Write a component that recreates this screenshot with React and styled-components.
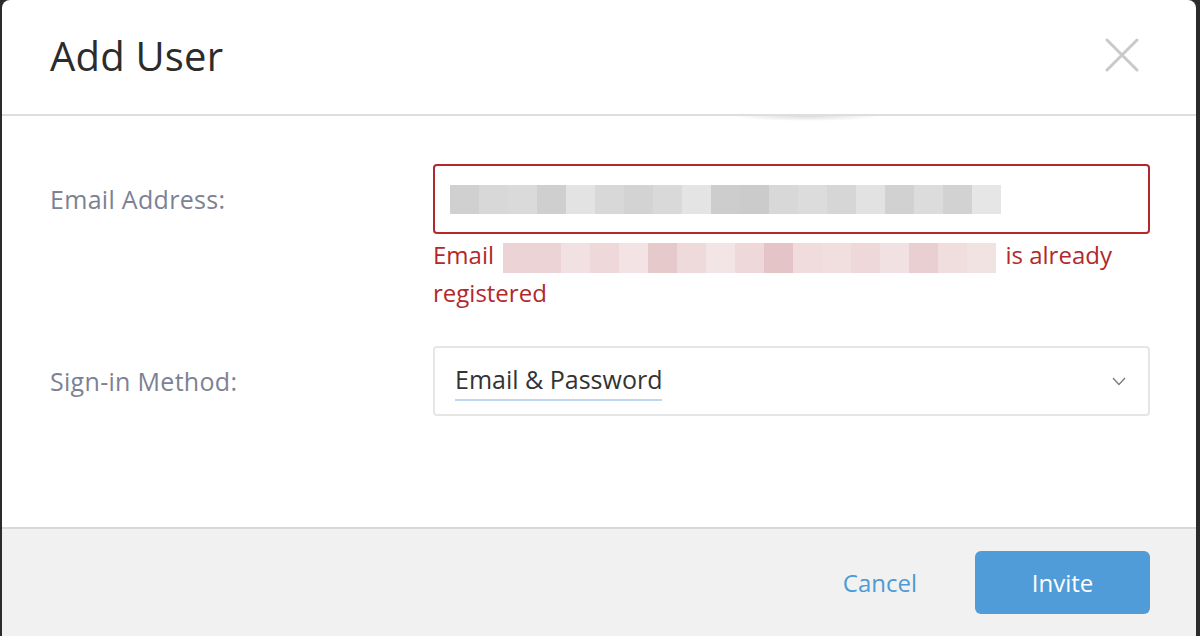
import styled, { createGlobalStyle } from 'styled-components';

const GlobalStyle = createGlobalStyle`
  html, body {
    margin: 0;
    padding: 0;
    background: #2b2b2b;
    overflow: hidden;
  }
  * {
    box-sizing: border-box;
  }
`;

const emailShades = [
  '#d0d0d0', '#d8d8d8', '#dadada', '#cfcfcf', '#e3e3e3', '#d8d8d8', '#d3d3d3',
  '#d9d9d9', '#e4e4e4', '#cdcdcd', '#cbcbcb', '#d8d8d8', '#dcdcdc', '#d6d6d6',
  '#e2e2e2', '#d1d1d1', '#dcdcdc', '#d2d2d2', '#e6e6e6',
];

const errorShades = [
  '#ecd3d5', '#ecd3d5', '#f2e1e2', '#eed8d9', '#f3e3e4', '#e6c9cb', '#efdadb',
  '#f3e4e5', '#eed8da', '#e4c4c6', '#f0dcdd', '#f1dfe0', '#eed8d9', '#f2e1e2',
  '#e9cfd1', '#f0dddd', '#f2e3e3',
];

const Dialog = styled.div`
  width: 1194px;
  height: 636px;
  margin: 0 4px 0 2px;
  background: #fff;
  border-radius: 8px 8px 0 0;
  display: flex;
  flex-direction: column;
  font-family: 'Open Sans', 'Liberation Sans', sans-serif;
  overflow: hidden;
`;

const Header = styled.div`
  height: 116px;
  flex: none;
  display: flex;
  align-items: center;
  justify-content: space-between;
  padding: 0 56px 4px 48px;
  border-bottom: 2px solid #dedede;
`;

const Title = styled.h1`
  margin: 0;
  font-size: 40px;
  font-weight: 400;
  color: #2c2c2c;
  letter-spacing: 0.2px;
`;

const CloseButton = styled.button`
  width: 36px;
  height: 36px;
  padding: 0;
  border: none;
  background: none;
  display: flex;
  align-items: center;
  justify-content: center;
  cursor: pointer;
`;

const Body = styled.div`
  flex: 1;
  padding: 48px 46px 0 48px;
  display: flex;
  flex-direction: column;
  gap: 34px;
  background: radial-gradient(ellipse 75px 5px at 805px 0, rgba(0, 0, 0, 0.14), transparent)
    no-repeat;
`;

const Row = styled.div`
  display: grid;
  grid-template-columns: 383px 1fr;
  align-items: start;
`;

const Label = styled.label`
  line-height: 70px;
  font-size: 25px;
  letter-spacing: 0.3px;
  color: #7c8294;
`;

const Field = styled.div`
  display: flex;
  flex-direction: column;
`;

const InputBox = styled.div`
  height: 70px;
  border: 2px solid ${(p) => (p.$error ? '#b2282b' : '#e6e6e6')};
  border-radius: 4px;
  display: flex;
  align-items: center;
  padding: 0 22px 0 15px;
  background: #fff;
`;

const Redacted = styled.span`
  display: inline-flex;
  vertical-align: middle;
  height: ${(p) => p.$h}px;
  margin: 0 ${(p) => p.$gap || 0}px;
`;

const Block = styled.span`
  width: 29px;
  height: 100%;
  background: ${(p) => p.$c};
`;

const ErrorText = styled.div`
  margin-top: 2px;
  font-size: 24px;
  line-height: 38px;
  color: #b2282b;
`;

const SelectValue = styled.span`
  flex: 1;
  display: flex;
  align-items: center;
`;

const Underlined = styled.span`
  font-size: 25px;
  color: #333;
  padding-bottom: 3px;
  margin-left: 5px;
  border-bottom: 2px solid #bcd7f2;
`;

const Footer = styled.div`
  height: 109px;
  flex: none;
  background: #f1f1f1;
  border-top: 2px solid #d8d8d8;
  display: flex;
  align-items: center;
  justify-content: flex-end;
  gap: 58px;
  padding: 0 46px 0 0;
`;

const LinkButton = styled.button`
  border: none;
  background: none;
  padding: 0;
  font-family: inherit;
  font-size: 24px;
  color: #4d9ad6;
  cursor: pointer;
`;

const PrimaryButton = styled.button`
  width: 175px;
  height: 63px;
  border: none;
  border-radius: 6px;
  background: #4f9cd8;
  color: #fff;
  font-family: inherit;
  font-size: 24px;
  cursor: pointer;
`;

export default function App() {
  return (
    <>
      <GlobalStyle />
      <Dialog>
        <Header>
          <Title>Add User</Title>
          <CloseButton aria-label="Close">
            <svg width="34" height="34" viewBox="0 0 34 34">
              <path
                d="M2 2 L32 32 M32 2 L2 32"
                stroke="#c9c9c9"
                strokeWidth="3"
                strokeLinecap="round"
              />
            </svg>
          </CloseButton>
        </Header>
        <Body>
          <Row>
            <Label>Email Address:</Label>
            <Field>
              <InputBox $error>
                <Redacted $h={29}>
                  {emailShades.map((c, i) => (
                    <Block key={i} $c={c} />
                  ))}
                </Redacted>
              </InputBox>
              <ErrorText>
                Email{' '}
                <Redacted $h={30} $gap={3}>
                  {errorShades.map((c, i) => (
                    <Block key={i} $c={c} />
                  ))}
                </Redacted>{' '}
                is already registered
              </ErrorText>
            </Field>
          </Row>
          <Row>
            <Label>Sign-in Method:</Label>
            <InputBox>
              <SelectValue>
                <Underlined>Email &amp; Password</Underlined>
              </SelectValue>
              <svg width="14" height="9" viewBox="0 0 14 9">
                <path d="M1 1 L7 7.5 L13 1" fill="none" stroke="#7a7a7a" strokeWidth="1.3" />
              </svg>
            </InputBox>
          </Row>
        </Body>
        <Footer>
          <LinkButton>Cancel</LinkButton>
          <PrimaryButton>Invite</PrimaryButton>
        </Footer>
      </Dialog>
    </>
  );
}
